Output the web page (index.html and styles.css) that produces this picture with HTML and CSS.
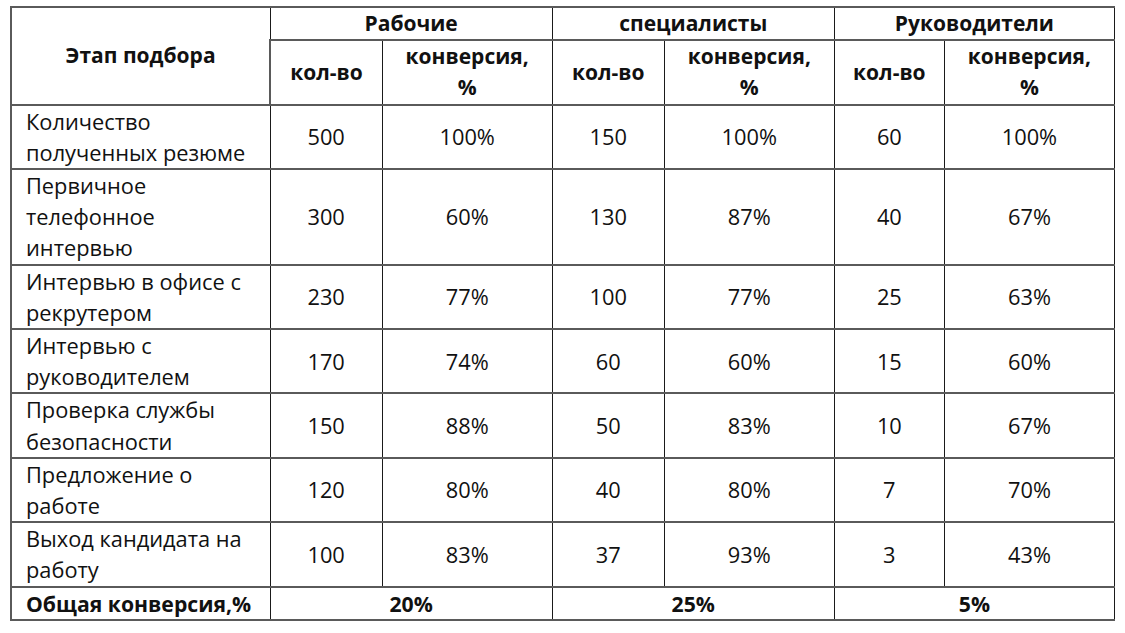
FILE: index.html
```html
<!DOCTYPE html>
<html lang="ru">
<head>
<meta charset="utf-8">
<title>Конверсия по этапам подбора</title>
<link rel="stylesheet" href="styles.css">
</head>
<body>
<div class="page">
<table class="funnel">
  <colgroup>
    <col class="c-stage">
    <col class="c-qty">
    <col class="c-conv">
    <col class="c-qty">
    <col class="c-conv">
    <col class="c-qty2">
    <col class="c-conv">
  </colgroup>
  <thead>
    <tr class="h1">
      <th rowspan="2" class="stage-h">Этап подбора</th>
      <th colspan="2">Рабочие</th>
      <th colspan="2">специалисты</th>
      <th colspan="2">Руководители</th>
    </tr>
    <tr class="h2">
      <th>кол-во</th>
      <th>конверсия,<br>%</th>
      <th>кол-во</th>
      <th>конверсия,<br>%</th>
      <th>кол-во</th>
      <th>конверсия,<br>%</th>
    </tr>
  </thead>
  <tbody>
    <tr>
      <td class="stage">Количество<br>полученных резюме</td>
      <td>500</td><td>100%</td><td>150</td><td>100%</td><td>60</td><td>100%</td>
    </tr>
    <tr>
      <td class="stage">Первичное<br>телефонное<br>интервью</td>
      <td>300</td><td>60%</td><td>130</td><td>87%</td><td>40</td><td>67%</td>
    </tr>
    <tr>
      <td class="stage">Интервью в офисе с<br>рекрутером</td>
      <td>230</td><td>77%</td><td>100</td><td>77%</td><td>25</td><td>63%</td>
    </tr>
    <tr>
      <td class="stage">Интервью с<br>руководителем</td>
      <td>170</td><td>74%</td><td>60</td><td>60%</td><td>15</td><td>60%</td>
    </tr>
    <tr>
      <td class="stage">Проверка службы<br>безопасности</td>
      <td>150</td><td>88%</td><td>50</td><td>83%</td><td>10</td><td>67%</td>
    </tr>
    <tr>
      <td class="stage">Предложение о<br>работе</td>
      <td>120</td><td>80%</td><td>40</td><td>80%</td><td>7</td><td>70%</td>
    </tr>
    <tr>
      <td class="stage">Выход кандидата на<br>работу</td>
      <td>100</td><td>83%</td><td>37</td><td>93%</td><td>3</td><td>43%</td>
    </tr>
  </tbody>
  <tfoot>
    <tr class="total">
      <td class="stage">Общая конверсия,%</td>
      <td colspan="2">20%</td>
      <td colspan="2">25%</td>
      <td colspan="2">5%</td>
    </tr>
  </tfoot>
</table>
</div>
</body>
</html>
```

FILE: styles.css
```css
html, body {
  margin: 0;
  padding: 0;
  background: #ffffff;
}

.page {
  padding: 6px 0 0 10px;
}

.funnel {
  border-collapse: collapse;
  table-layout: fixed;
  width: 1105px;
  font-family: "Open Sans", Lato, "Liberation Sans", sans-serif;
  font-size: 21.8px;
  line-height: 31.2px;
  color: #111111;
}

.c-stage { width: 259px; }
.c-qty { width: 112px; }
.c-qty2 { width: 110px; }
.c-conv { width: 170px; }

.funnel th,
.funnel td {
  padding: 0;
  text-align: center;
  vertical-align: middle;
  border-left: 1px solid #1a1a1a;
  border-right: 1px solid #1a1a1a;
  border-top: 2px solid #5a5a5a;
  border-bottom: 2px solid #5a5a5a;
}

.funnel th {
  font-weight: 700;
  font-size: 21px;
}

.funnel td.stage {
  text-align: left;
  padding-left: 14px;
}

.funnel tr > :first-child {
  border-left: 2px solid #5a5a5a;
}

.total td {
  font-weight: 700;
  font-size: 21.2px;
}
```
